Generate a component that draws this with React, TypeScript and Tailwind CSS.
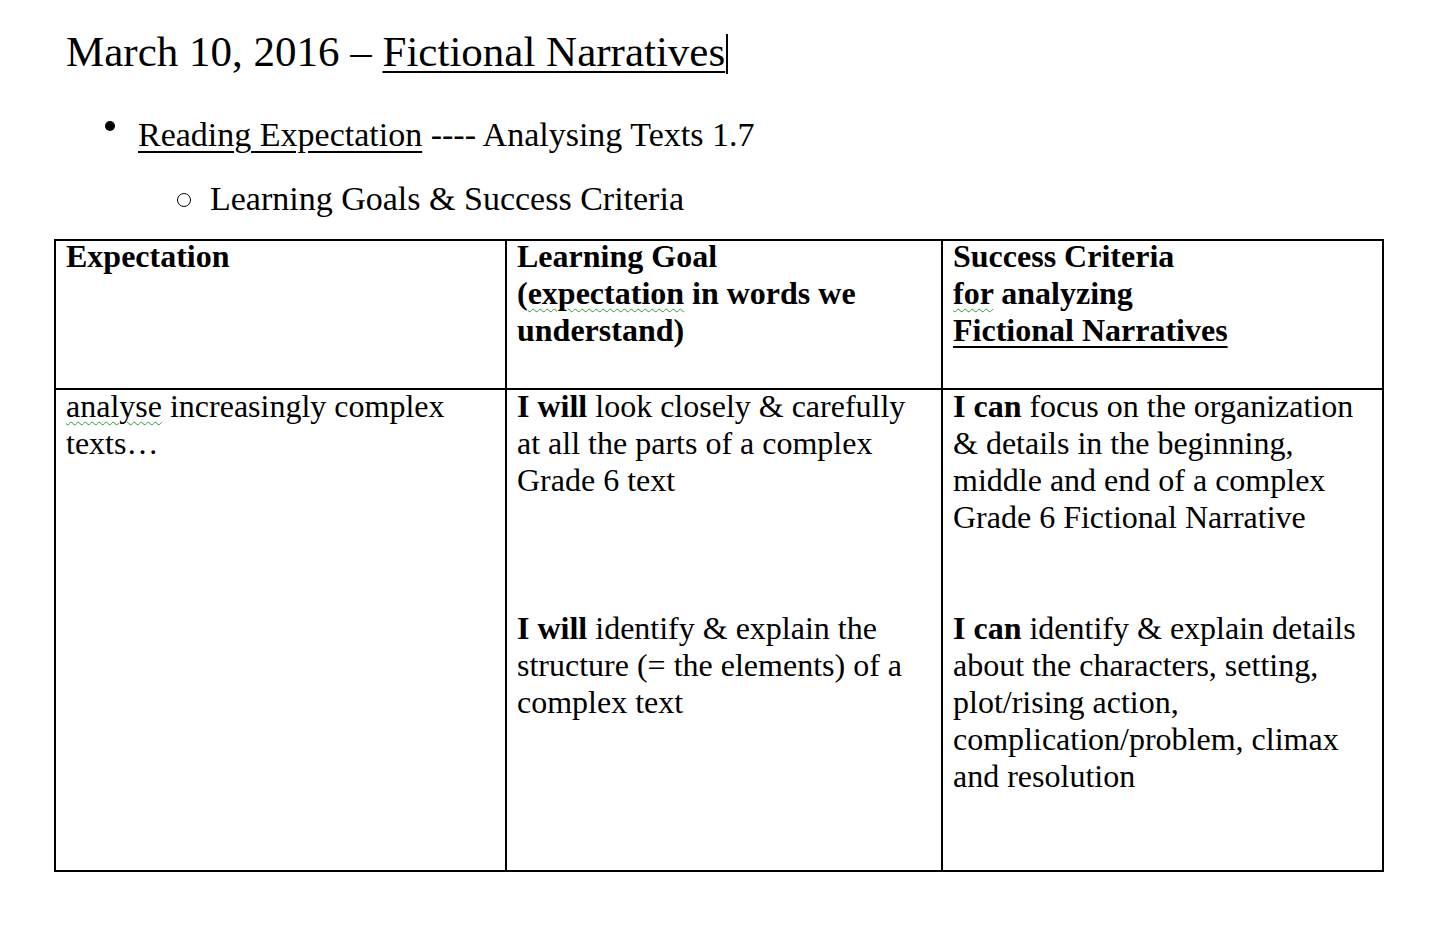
import React from "react";

const serif = "font-['Liberation_Serif','Times_New_Roman',serif]";

// green squiggle that Word puts under words it doesn't like
function Squiggle({ children }: { children: React.ReactNode }) {
  return (
    <span className="underline decoration-wavy decoration-[#2f9a2f] decoration-1 underline-offset-[4px]">
      {children}
    </span>
  );
}

function Blank() {
  return <div className="h-[37px]" />;
}

export default function App() {
  return (
    <div className={`min-h-screen w-full bg-white text-black ${serif}`}>
      <div className="pl-[66px] pt-[22px]">
        <h1 className="text-[43px] leading-[60px]">
          March 10, 2016 –{" "}
          <span className="underline decoration-[1.5px] underline-offset-[5px]">Fictional Narratives</span>
          <span className="ml-[1px] inline-block h-[40px] w-[1.5px] translate-y-[8px] bg-black align-baseline" />
        </h1>
      </div>

      <ul className="mt-[30px] text-[34px] leading-[46px]">
        <li className="flex items-start pl-[105px]">
          <span className="mt-[9px] mr-[23px] h-[10px] w-[10px] rounded-full bg-black" />
          <span>
            <span className="underline decoration-[1.5px] underline-offset-[5px]">Reading Expectation</span> ---- Analysing Texts 1.7
          </span>
        </li>
        <li className="mt-[18px] flex items-start pl-[177px]">
          <span className="mt-[17px] mr-[19px] h-[14px] w-[14px] rounded-full border-[1.5px] border-black" />
          <span>Learning Goals &amp; Success Criteria</span>
        </li>
      </ul>

      <div className="mt-[17px] ml-[54px] grid w-[1330px] grid-cols-[451px_436px_1fr] border-2 border-black text-[32px] leading-[37px]">
        {/* header row */}
        <div className="h-[149px] border-r-2 border-b-2 border-black pl-[10px] font-bold">
          <div className="-mt-[3px]">Expectation</div>
        </div>
        <div className="border-r-2 border-b-2 border-black pl-[10px] font-bold">
          <div className="-mt-[3px]">
            Learning Goal
            <br />(<Squiggle>expectation</Squiggle> in words we understand)
          </div>
        </div>
        <div className="border-b-2 border-black pl-[10px] font-bold">
          <div className="-mt-[3px]">
            Success Criteria
            <br />
            <Squiggle>for</Squiggle> analyzing
            <br />
            <span className="underline decoration-[1.5px] underline-offset-[5px]">Fictional Narratives</span>
          </div>
        </div>

        {/* body row */}
        <div className="h-[480px] border-r-2 border-black pl-[10px]">
          <div className="-mt-[2px]">
            <Squiggle>analyse</Squiggle> increasingly complex texts…
          </div>
        </div>
        <div className="border-r-2 border-black pr-[6px] pl-[10px]">
          <div className="-mt-[2px]">
            <p>
              <b>I will</b> look closely &amp; carefully at all the parts of a complex Grade 6 text
            </p>
            <Blank />
            <Blank />
            <Blank />
            <p>
              <b>I will</b> identify &amp; explain the structure (= the elements) of a complex text
            </p>
          </div>
        </div>
        <div className="pr-[6px] pl-[10px]">
          <div className="-mt-[2px]">
            <p>
              <b>I can</b> focus on the organization &amp; details in the beginning, middle and end of a complex Grade 6
              Fictional Narrative
            </p>
            <Blank />
            <Blank />
            <p>
              <b>I can</b> identify &amp; explain details about the characters, setting, plot/rising action,
              complication/problem, climax and resolution
            </p>
          </div>
        </div>
      </div>
    </div>
  );
}
